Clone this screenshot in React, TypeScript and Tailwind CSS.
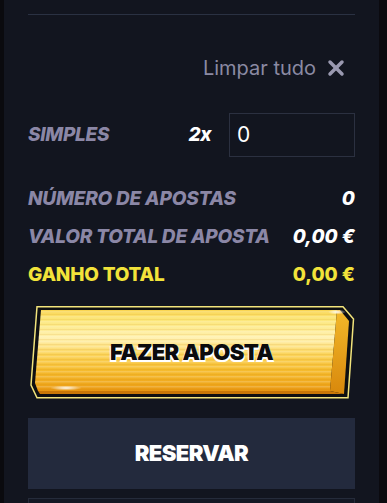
import { X } from "lucide-react";

const font = { fontFamily: "Inter, 'Noto Sans', sans-serif" };

function StatRow({
  label,
  value,
  highlight,
}: {
  label: string;
  value: string;
  highlight?: boolean;
}) {
  return (
    <div className="flex h-[38px] items-center justify-between">
      <span
        className={
          highlight
            ? "text-[19px] font-extrabold tracking-[-0.2px] text-[#f2e33a]"
            : "text-[19px] font-extrabold italic tracking-[-0.2px] text-[#8b87a6]"
        }
      >
        {label}
      </span>
      <span
        className={
          highlight
            ? "text-[19px] font-extrabold text-[#f2e33a]"
            : "text-[19px] font-extrabold italic text-white"
        }
      >
        {value}
      </span>
    </div>
  );
}

function BetButton() {
  return (
    <button className="relative flex h-[93px] w-full items-center justify-center">
      <svg
        className="absolute inset-0 h-full w-full"
        viewBox="0 0 327 93"
        preserveAspectRatio="none"
      >
        <defs>
          <linearGradient id="face" x1="0" y1="0" x2="0" y2="1">
            <stop offset="0" stopColor="#f9d552" />
            <stop offset="0.12" stopColor="#fce77a" />
            <stop offset="0.35" stopColor="#fff1b0" />
            <stop offset="0.55" stopColor="#fbd45a" />
            <stop offset="0.75" stopColor="#f5bb2e" />
            <stop offset="0.92" stopColor="#efa71c" />
            <stop offset="1" stopColor="#e89612" />
          </linearGradient>
          <linearGradient id="side" x1="0" y1="0" x2="0" y2="1">
            <stop offset="0" stopColor="#f3b92a" />
            <stop offset="1" stopColor="#d8880c" />
          </linearGradient>
          <radialGradient id="glow">
            <stop offset="0" stopColor="#ffffff" stopOpacity="0.95" />
            <stop offset="1" stopColor="#ffffff" stopOpacity="0" />
          </radialGradient>
          <pattern id="stripes" width="4" height="5" patternUnits="userSpaceOnUse">
            <rect y="0" width="4" height="1.5" fill="#ffffff" opacity="0.18" />
            <rect y="3" width="4" height="1" fill="#c87a00" opacity="0.12" />
          </pattern>
        </defs>
        <polygon
          points="9,0.75 315,0.75 325.5,13 320,91.75 9,91.75 3,79"
          fill="#0e0f12"
          stroke="#f2e47c"
          strokeWidth="1.5"
        />
        <polygon points="13,4 309,4 302,85 10,85 7,77" fill="url(#face)" />
        <polygon points="13,4 309,4 302,85 10,85 7,77" fill="url(#stripes)" />
        <polygon points="309,4 312,4 321,15 316,88 302,85" fill="url(#side)" />
        <polygon points="10,85 302,85 316,88 12,88" fill="#c97708" />
        <ellipse cx="38" cy="82" rx="16" ry="2.5" fill="url(#glow)" />
        <ellipse cx="309" cy="6" rx="9" ry="2.5" fill="url(#glow)" />
      </svg>
      <span
        className="relative text-[22px] font-black tracking-[-0.6px] text-[#0b0b0d] [text-shadow:0_2px_0_#ffffff,1px_2px_0_#ffffff,-1px_2px_0_#ffffff]"
        style={font}
      >
        FAZER APOSTA
      </span>
    </button>
  );
}

export default function App() {
  return (
    <div className="flex h-[503px] w-[387px] overflow-hidden bg-[#0b0b10]" style={font}>
      <div className="w-[4px] shrink-0 bg-[#0a0a0e]" />
      <div className="min-w-0 flex-1 overflow-hidden bg-[#12151f] px-[24px]">
        <div className="mt-[14px] h-px bg-[#2a3142]" />

        {/* CLEAR ALL */}
        <div className="mt-[40px] flex h-[26px] items-center justify-end gap-[8px] pr-[7px]">
          <span className="text-[20px] tracking-[0px] text-[#8b8aa3]">Limpar tudo</span>
          <X size={24} strokeWidth={3.5} className="text-[#9a99b0]" />
        </div>

        {/* SIMPLES */}
        <div className="mt-[32px] flex h-[44px] items-center">
          <span className="flex-1 text-[19px] font-extrabold italic tracking-[-0.3px] text-[#8b87a6]">
            SIMPLES
          </span>
          <span className="mr-[18px] text-[19px] font-extrabold italic tracking-[-0.5px] text-white">
            2x
          </span>
          <div className="flex h-[44px] w-[126px] items-center border border-[#2b3040] px-[7px] text-[21px] text-white">
            0
          </div>
        </div>

        {/* STATS */}
        <div className="mt-[23px]">
          <StatRow label="NÚMERO DE APOSTAS" value="0" />
          <StatRow label="VALOR TOTAL DE APOSTA" value="0,00 €" />
          <StatRow label="GANHO TOTAL" value="0,00 €" highlight />
        </div>

        <div className="mt-[12px]">
          <BetButton />
        </div>

        <button className="mt-[19px] flex h-[71px] w-full items-center justify-center bg-[#232a3d] text-[22px] font-black tracking-[-0.6px] text-white">
          RESERVAR
        </button>

        <div className="mt-[9px] h-[40px] border border-[#252b3a] bg-[#141824]" />
      </div>
      <div className="w-[8px] shrink-0 bg-[#0b0a0f]" />
    </div>
  );
}
